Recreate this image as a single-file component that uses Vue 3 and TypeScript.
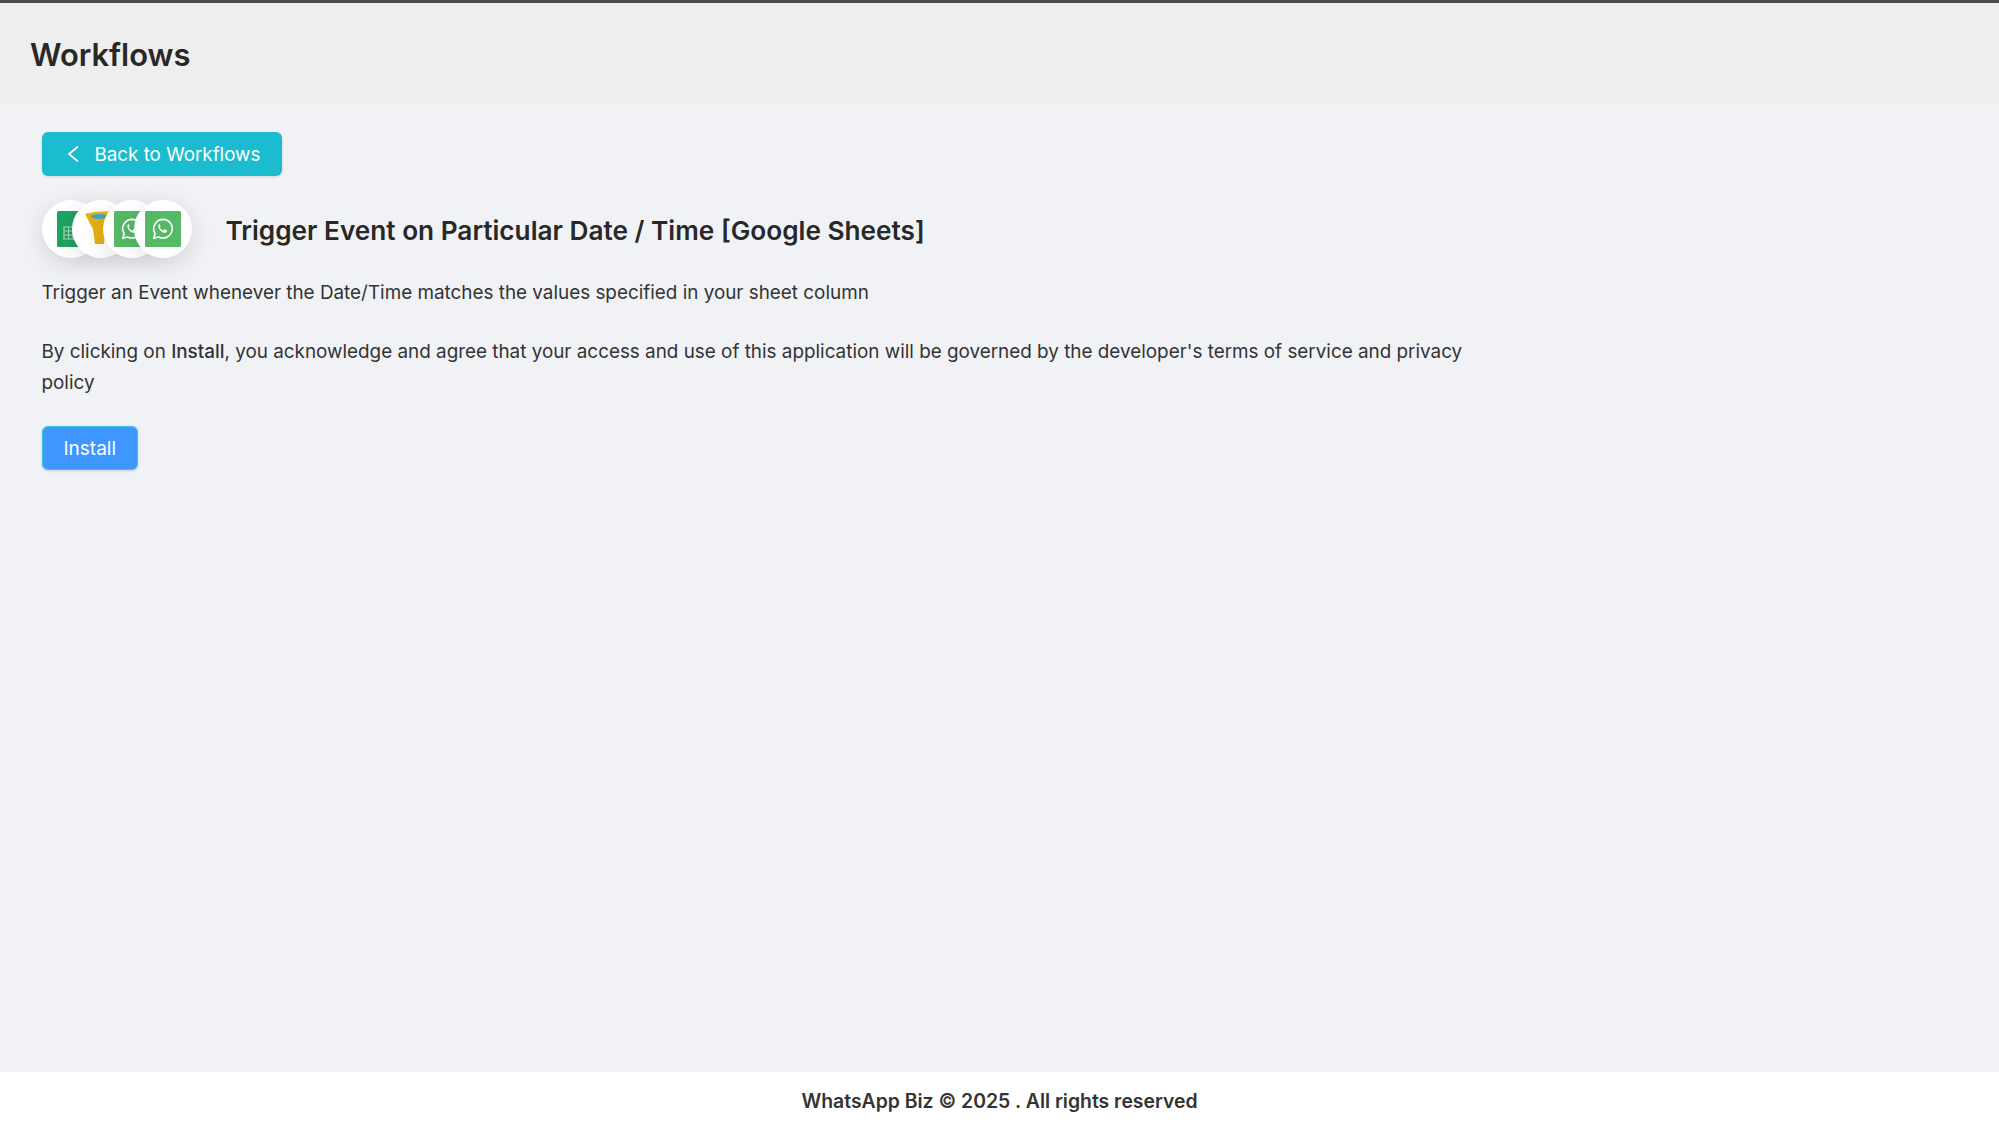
<script setup lang="ts">
const stack = ['sheets', 'filter', 'whatsapp', 'whatsapp']
</script>

<template>
  <div class="page">
    <header class="top">
      <h1>Workflows</h1>
    </header>
    <main class="content">
      <button class="back-button">
        <svg width="14" height="18" viewBox="0 0 14 18" fill="none">
          <path d="M12 1.500 L3 9 L12 16.500" stroke="#fff" stroke-width="1.700" />
        </svg>
        Back to Workflows
      </button>
      <div class="title-row">
        <div class="icons">
          <div v-for="(icon, index) in stack" :key="index" class="icon-circle">
            <svg v-if="icon === 'sheets'" class="sheet-icon" width="30" height="36" viewBox="0 0 30 36">
              <rect width="30" height="36" rx="1.5" fill="#1fa463" />
              <path d="M7 16h14v12H7z" fill="none" stroke="#a5d9b9" stroke-width="1.2" />
              <path d="M7 20h14M7 24h14M11.500 16v12M16 16v12" stroke="#a5d9b9" stroke-width="1" />
            </svg>
            <svg v-else-if="icon === 'filter'" width="36" height="36" viewBox="0 0 36 36">
              <path d="M2 3 C10 0 26 0 36 1 L22 20 L21 33 L12 33 L10 18 Z" fill="#e5b015" />
              <ellipse cx="16" cy="5.500" rx="8" ry="2.500" fill="#3fa9c4" />
            </svg>
            <svg v-else width="36" height="36" viewBox="0 0 36 36">
              <rect width="36" height="36" rx="1.500" fill="#55b966" />
              <g transform="translate(2.200 2) scale(.88)">
                <path d="M18 7.200a10.600 10.600 0 0 0-9.100 16L7.600 28.600l5.400-1.400A10.600 10.600 0 1 0 18 7.200z" fill="none" stroke="#fff" stroke-width="1.800" />
                <path d="M14.200 12.800c-.5 0-1.300.5-1.500 1.500-.3 1.500.4 3.400 2 5.200 1.800 2 3.800 3 5.500 3 1.200 0 2.100-.8 2.300-1.700.1-.5.1-.9 0-1l-2.400-1.200c-.3-.1-.5 0-.7.2l-.8 1c-.2.2-.4.2-.7.1-1.600-.7-2.800-1.800-3.600-3.300-.1-.3-.1-.4.1-.6l.6-.8c.1-.2.2-.4.1-.6l-1-2.300c-.1-.3-.3-.4-.5-.4z" fill="#fff" />
              </g>
            </svg>
          </div>
        </div>
        <h2>Trigger Event on Particular Date / Time [Google Sheets]</h2>
      </div>
      <p class="desc">Trigger an Event whenever the Date/Time matches the values specified in your sheet column</p>
      <p class="terms">
        By clicking on <strong>Install</strong>, you acknowledge and agree that your access and use of this application will be governed by the developer's terms of service and privacy policy
      </p>
      <button class="install-button">Install</button>
    </main>
    <footer class="bottom">WhatsApp Biz © 2025 . All rights reserved</footer>
  </div>
</template>

<style>
html, body {
  margin: 0;
  background: #f0f2f6;
}
</style>

<style scoped>
.page {
  height: 1131px;
  display: flex;
  flex-direction: column;
  font-family: Inter, "Liberation Sans", sans-serif;
  color: #2a2a2a;
  background: #f0f2f6;
}

.top {
  height: 100px;
  border-top: 3px solid #4a4a4a;
  background: #eeeeee;
  padding-left: 30px;
  display: flex;
  align-items: center;
  box-sizing: content-box;
}

.top h1 {
  margin: 3px 0 0;
  font-size: 30.900px;
  font-weight: 600;
  color: #282828;
}

.content {
  flex: 1;
  padding: 29px 0 0 41.500px;
}

.back-button {
  display: flex;
  align-items: center;
  gap: 15px;
  width: 240px;
  height: 44px;
  padding: 0 0 0 24px;
  border: none;
  border-radius: 6px;
  background: #1bbcd0;
  color: #fff;
  font-family: inherit;
  font-size: 18.800px;
  box-shadow: 0 1px 3px rgba(0, 0, 0, 0.12);
}

.title-row {
  display: flex;
  align-items: center;
  margin-top: 24px;
}

.icons {
  display: flex;
  width: 151px;
  flex-shrink: 0;
  margin-right: 33px;
}

.icon-circle {
  width: 58px;
  height: 58px;
  flex-shrink: 0;
  border-radius: 50%;
  background: #fff;
  display: flex;
  align-items: center;
  justify-content: center;
  box-shadow: 0 6px 24px rgba(0, 0, 0, 0.12);
}

.icon-circle + .icon-circle {
  margin-left: -27.200px;
}

.sheet-icon {
  margin-left: 3px;
}

.title-row h2 {
  margin: 2px 0 0;
  font-size: 26.200px;
  font-weight: 600;
  color: #282828;
}

.desc,
.terms {
  margin: 0;
  width: 1470px;
  font-size: 18.870px;
  line-height: 30.600px;
  color: #333;
}

.desc {
  margin-top: 19.500px;
}

.terms {
  margin-top: 29px;
}

.terms strong {
  font-weight: 500;
}

.install-button {
  display: block;
  margin-top: 27.500px;
  width: 96.500px;
  height: 44px;
  padding: 1px 0 0;
  border: 1px solid #3fc4d8;
  border-radius: 6px;
  background: #3f96ff;
  color: #fff;
  font-family: inherit;
  font-size: 19px;
  box-shadow: 0 1px 3px rgba(0, 0, 0, 0.15);
}

.bottom {
  height: 57px;
  padding-bottom: 2px;
  background: #fff;
  display: flex;
  align-items: center;
  justify-content: center;
  font-size: 19.400px;
  font-weight: 600;
  color: #333;
}
</style>
